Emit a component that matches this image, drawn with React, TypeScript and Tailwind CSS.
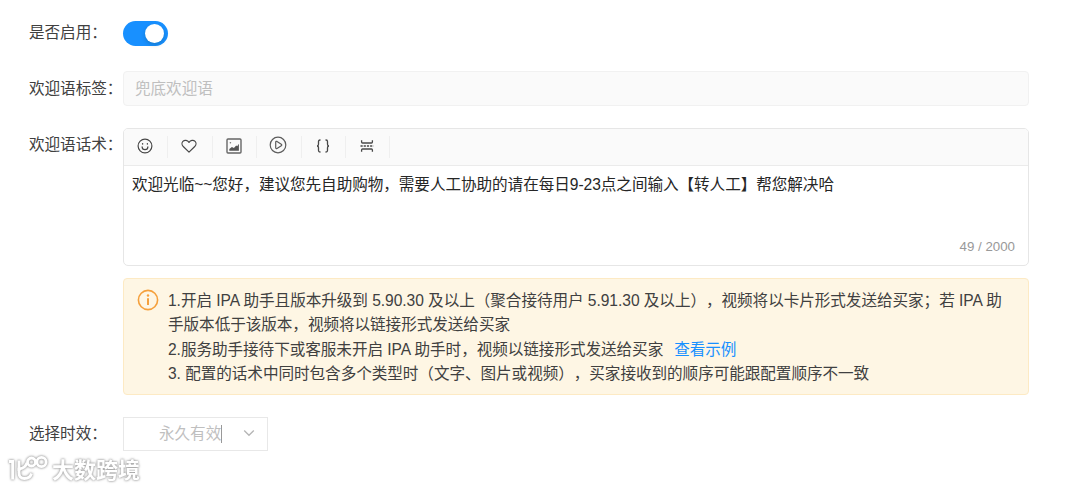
import { ReactNode } from 'react';

interface FormRowProps {
  label: string;
  className?: string;
  labelClassName?: string;
  children: ReactNode;
}

function FormRow({ label, className = '', labelClassName = '', children }: FormRowProps) {
  return (
    <div className={`flex ${className}`}>
      <label className={`w-[94px] shrink-0 whitespace-nowrap text-[#404040] ${labelClassName}`}>{label}</label>
      {children}
    </div>
  );
}

function SmileIcon() {
  return (
    <svg width="16" height="16" viewBox="0 0 16 16" fill="none" stroke="currentColor" strokeWidth="1.2" strokeLinecap="round">
      <circle cx="8" cy="8" r="6.9" />
      <path d="M5.1 8.8a2.9 2.9 0 0 0 5.8 0" />
      <path d="M5.6 5.7v.4M10.4 5.7v.4" strokeWidth="1.4" />
    </svg>
  );
}

function HeartIcon() {
  return (
    <svg width="16" height="16" viewBox="0 0 16 16" fill="none" stroke="currentColor" strokeWidth="1.2" strokeLinejoin="round">
      <path d="M8 14.1 2 8.2C.7 6.8.7 4.6 1.9 3.4c1.7-1.7 4.6-1.3 6.1 1 1.5-2.3 4.4-2.7 6.1-1 1.2 1.2 1.2 3.4-.1 4.8z" />
    </svg>
  );
}

function PictureIcon() {
  return (
    <svg width="16" height="16" viewBox="0 0 16 16" fill="none" stroke="#666" strokeWidth="1.4">
      <rect x="1" y="1" width="14" height="14" rx="1" />
      <path d="M3.3 12.8V11l2.6-2 2 1.1 2.3-2.6 1 .8 1.7-2.5v7z" fill="#555" stroke="none" />
      <circle cx="4.4" cy="4.7" r=".8" fill="#777" stroke="none" />
    </svg>
  );
}

function PlayIcon() {
  return (
    <svg className="-mt-[2px]" width="18" height="18" viewBox="0 0 18 18" fill="none" stroke="#5c5c5c" strokeWidth="1.2" strokeLinejoin="round">
      <circle cx="9" cy="9" r="7.8" />
      <path d="M6.7 6.2c0-.8.7-1.1 1.3-.8l4.3 2.8c.6.4.6 1.1 0 1.5L8 12.5c-.6.3-1.3 0-1.3-.8z" />
    </svg>
  );
}

function BracesIcon() {
  return (
    <svg width="16" height="16" viewBox="0 0 16 16" fill="none" stroke="currentColor" strokeWidth="1.3">
      <path d="M5.5 2H5C3.9 2 3.5 2.5 3.5 3.5v2.8c0 1-.5 1.7-1.5 1.7 1 0 1.5.7 1.5 1.7v2.8c0 1 .4 1.5 1.5 1.5h.5" />
      <path d="M10.5 2h.5c1.1 0 1.5.5 1.5 1.5v2.8c0 1 .5 1.7 1.5 1.7-1 0-1.5.7-1.5 1.7v2.8c0 1-.4 1.5-1.5 1.5h-.5" />
    </svg>
  );
}

function SplitIcon() {
  return (
    <svg width="16" height="16" viewBox="0 0 16 16" fill="none" stroke="currentColor" strokeWidth="1.3">
      <path d="M2.6 2.2v1.9c0 .6.3.9.9.9h9c.6 0 .9-.3.9-.9V2.2" />
      <path d="M2.6 13.8v-1.9c0-.6.3-.9.9-.9h9c.6 0 .9.3.9.9v1.9" />
      <path d="M1.5 8h13" strokeDasharray="2.2 1" />
    </svg>
  );
}

const tools = [
  { name: 'smile', icon: <SmileIcon /> },
  { name: 'heart', icon: <HeartIcon /> },
  { name: 'picture', icon: <PictureIcon /> },
  { name: 'play', icon: <PlayIcon /> },
  { name: 'braces', icon: <BracesIcon /> },
  { name: 'split', icon: <SplitIcon /> },
];

function Editor() {
  return (
    <div className="flex h-[138px] w-[906px] flex-col overflow-hidden rounded-[5px] border border-[#e6e6e6] bg-white">
      <div className="flex h-[37px] shrink-0 items-center border-b border-[#ebebeb] bg-[#fafafa] text-[#484848]">
        {tools.map(tool => (
          <button key={tool.name} className="flex h-[22px] w-[44.4px] items-center justify-center border-r border-[#efefef] pr-[1.5px] pb-[2px]">
            {tool.icon}
          </button>
        ))}
      </div>
      <p className="mt-[7px] whitespace-nowrap pl-2 leading-6 text-[#262626]">
        欢迎光临~~您好，建议您先自助购物，需要人工协助的请在每日9-23点之间输入【转人工】帮您解决哈
      </p>
      <div className="mt-auto pr-[13px] pb-2 text-right text-[13.3px] leading-5 tracking-normal text-[#999]">49 / 2000</div>
    </div>
  );
}

function Notice() {
  return (
    <div className="flex h-[117px] w-[906px] rounded-[4px] border border-[#fdeac4] bg-[#fef6e4] pt-[10px] pl-[13px] text-[#404040]">
      <svg className="mr-[9px] shrink-0" width="22" height="22" viewBox="0 0 22 22" fill="none" stroke="#f5a03c" strokeWidth="1.6">
        <circle cx="11" cy="11" r="9.6" />
        <path d="M11 9.3V16" strokeWidth="2" />
        <circle cx="11" cy="6.5" r="1.2" fill="#f5a03c" stroke="none" />
      </svg>
      <div className="whitespace-nowrap leading-[24.3px]">
        <p>1.开启 IPA 助手且版本升级到 5.90.30 及以上（聚合接待用户 5.91.30 及以上），视频将以卡片形式发送给买家；若 IPA 助</p>
        <p>手版本低于该版本，视频将以链接形式发送给买家</p>
        <p>
          2.服务助手接待下或客服未开启 IPA 助手时，视频以链接形式发送给买家
          <a className="ml-[11px] text-[#1890ff]">查看示例</a>
        </p>
        <p>3. 配置的话术中同时包含多个类型时（文字、图片或视频），买家接收到的顺序可能跟配置顺序不一致</p>
      </div>
    </div>
  );
}

function Watermark() {
  return (
    <div className="mt-[5px] flex items-center pl-[8px] [filter:drop-shadow(0_0_1px_#999)_drop-shadow(0_0_1px_#ccc)]">
      <svg width="42" height="30" viewBox="0 0 42 30" fill="none" stroke="#fff" strokeWidth="2.8">
        <path d="M1 5.5h3.6v18" />
        <path d="M11 4.5v10.500" />
        <path d="M19 6.500c-1 4-4 6-8 6.500v3.500c0 3.800 2.200 6 5.500 6 3.500 0 6-1.800 7-5" />
        <circle cx="23.500" cy="6" r="4" />
        <circle cx="33.500" cy="6" r="4.600" />
      </svg>
      <span className="ml-[2px] text-[22px] font-bold leading-[30px] tracking-normal text-white">大数跨境</span>
    </div>
  );
}

export default function App() {
  return (
    <div className="h-[490px] w-[1080px] overflow-hidden bg-white pt-[20px] font-['Liberation_Sans','Noto_Sans_CJK_SC',sans-serif] text-[15.6px] leading-6 tracking-[-0.05px] [text-spacing-trim:space-all]">
      <div className="pl-[29px]">
        <FormRow label="是否启用：" className="h-[26px] items-center">
          <button className="flex h-[25px] w-[44.5px] items-center justify-end rounded-full bg-[#1890ff] pr-[4px]">
            <span className="size-[19px] rounded-full bg-white shadow-[0_2px_4px_rgba(0,35,11,0.2)]" />
          </button>
        </FormRow>

        <FormRow label="欢迎语标签：" className="mt-[25px] items-center">
          <div className="flex h-[35px] w-[906px] items-center rounded-[4px] border border-[#f1f1f1] bg-[#fafafa] pl-[11px] text-[#bfbfbf]">
            兜底欢迎语
          </div>
        </FormRow>

        <FormRow label="欢迎语话术：" className="mt-[22px]" labelClassName="pt-[5px]">
          <Editor />
        </FormRow>

        <div className="mt-[12px] pl-[94px]">
          <Notice />
        </div>

        <FormRow label="选择时效：" className="mt-[22px] items-center">
          <div className="flex h-[34px] w-[144.5px] items-center border border-[#e8e8e8] bg-white pl-[35px] text-[#bfbfbf]">
            <span>永久有效</span>
            <span className="h-[18px] w-px bg-[#999]" />
            <svg className="-mt-[2px] ml-[21px]" width="12" height="12" viewBox="0 0 12 12" fill="none" stroke="#b5b5b5" strokeWidth="1.3">
              <path d="M1.2 3.5 6 8.3l4.8-4.8" />
            </svg>
          </div>
        </FormRow>
      </div>
      <Watermark />
    </div>
  );
}
